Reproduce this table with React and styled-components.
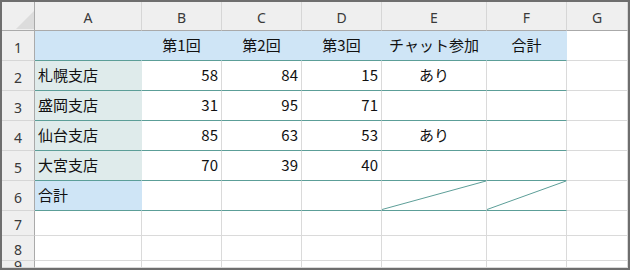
import React from "react";
import styled, { createGlobalStyle } from "styled-components";

const Global = createGlobalStyle`
  body {
    margin: 0;
    background: #fff;
  }
`;

const TEAL = "#5c9e98";
const GRID = "#dadada";
const BLUE = "#cfe5f6";
const SIDE = "#dfebeb";

const Sheet = styled.div`
  width: 630px;
  height: 270px;
  box-sizing: border-box;
  border: 2px solid #6e6e6e;
  overflow: hidden;
  display: grid;
  grid-template-columns: 33px 107px 80px 80px 80px 105px 80px 1fr;
  grid-template-rows: 29px repeat(6, 30px) 25px 25px 1fr;
  background: #fff;
`;

const Head = styled.div`
  box-sizing: border-box;
  background: #efefef;
  border-right: 1px solid ${(p) => (p.$side ? "#aaaaaa" : "#d6d6d6")};
  border-bottom: 1px solid ${(p) => (p.$top ? "#aaaaaa" : "#d6d6d6")};
  display: flex;
  align-items: center;
  justify-content: center;
  padding-top: ${(p) => (p.$top ? "2px" : "3px")};
  font: 14px "Noto Sans", "Liberation Sans", sans-serif;
  color: #3a3a3a;
  position: relative;
  overflow: hidden;
`;

const Corner = styled.svg`
  position: absolute;
  left: 12px;
  top: 8px;
`;

const Cell = styled.div`
  box-sizing: border-box;
  position: relative;
  background: ${(p) => p.$fill || "#fff"};
  border-right: 1px solid ${(p) => p.$fill || GRID};
  border-bottom: 1px solid ${(p) => (p.$teal ? TEAL : p.$fill || GRID)};
  display: flex;
  align-items: center;
  justify-content: ${(p) =>
    p.$align === "right" ? "flex-end" : p.$align === "center" ? "center" : "flex-start"};
  padding: 0 3px 3px 3px;
  font: 15px "Noto Sans CJK JP", "Noto Sans", sans-serif;
  color: #111;
  white-space: nowrap;
`;

const Slash = styled.svg`
  position: absolute;
  left: 0;
  top: 0;
  width: 100%;
  height: 100%;
`;

const cols = ["A", "B", "C", "D", "E", "F", "G"];

const titles = ["", "第1回", "第2回", "第3回", "チャット参加", "合計"];

const data = [
  ["札幌支店", 58, 84, 15, "あり"],
  ["盛岡支店", 31, 95, 71, ""],
  ["仙台支店", 85, 63, 53, "あり"],
  ["大宮支店", 70, 39, 40, ""],
];

function Diagonal() {
  return (
    <Slash preserveAspectRatio="none" viewBox="0 0 100 30">
      <line
        x1="0"
        y1="29.5"
        x2="100"
        y2="0"
        stroke={TEAL}
        strokeWidth="1"
        vectorEffect="non-scaling-stroke"
      />
    </Slash>
  );
}

function App() {
  return (
    <>
      <Global />
      <Sheet>
        <Head $top $side>
          <Corner width="20" height="20" viewBox="0 0 20 20">
            <polygon points="2,19 20,19 20,1" fill="#dcdcdc" />
          </Corner>
        </Head>
        {cols.map((c) => (
          <Head key={c} $top>
            {c}
          </Head>
        ))}

        {/* row 1 */}
        <Head $side>1</Head>
        {titles.map((t, i) => (
          <Cell key={i} $fill={BLUE} $teal $align="center">
            {t}
          </Cell>
        ))}
        <Cell />

        {/* rows 2-5 */}
        {data.map((r, ri) => (
          <React.Fragment key={ri}>
            <Head $side>{ri + 2}</Head>
            <Cell $fill={SIDE} $teal>
              {r[0]}
            </Cell>
            <Cell $teal $align="right">{r[1]}</Cell>
            <Cell $teal $align="right">{r[2]}</Cell>
            <Cell $teal $align="right">{r[3]}</Cell>
            <Cell $teal $align="center">{r[4]}</Cell>
            <Cell $teal />
            <Cell />
          </React.Fragment>
        ))}

        {/* row 6 */}
        <Head $side>6</Head>
        <Cell $fill={BLUE} $teal>
          合計
        </Cell>
        <Cell $teal />
        <Cell $teal />
        <Cell $teal />
        <Cell $teal>
          <Diagonal />
        </Cell>
        <Cell $teal>
          <Diagonal />
        </Cell>
        <Cell />

        {[7, 8, 9].map((n) => (
          <React.Fragment key={n}>
            <Head $side>{n}</Head>
            {cols.map((c) => (
              <Cell key={c} />
            ))}
          </React.Fragment>
        ))}
      </Sheet>
    </>
  );
}

export default App;
